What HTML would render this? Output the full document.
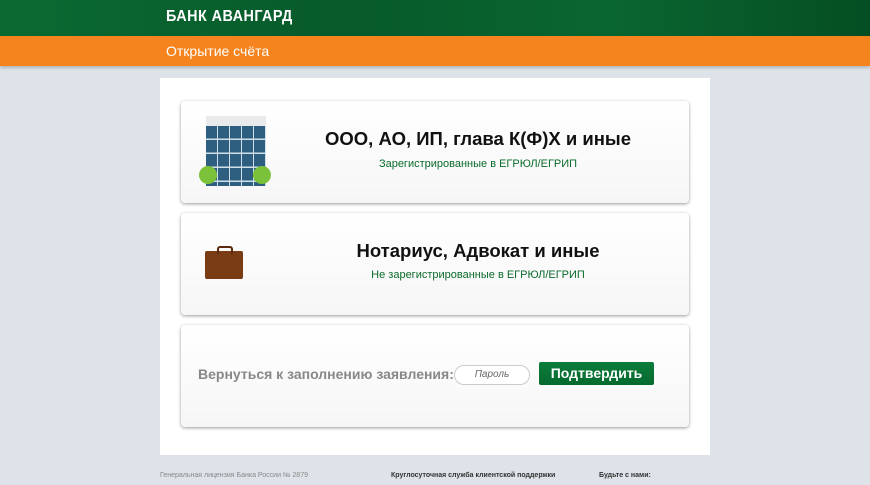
<!DOCTYPE html>
<html><head><meta charset="utf-8"><style>
body{margin:0;width:870px;height:485px;background:#dde3e8;font-family:"Liberation Sans",sans-serif;overflow:hidden;position:relative}
.hdr{position:absolute;top:0;left:0;width:870px;height:36px;background:linear-gradient(90deg,#0b6a32,#075a2a 40%,#0a6630 70%,#054e23);}
.hdr .t{position:absolute;left:166px;top:8px;color:#fff;font-weight:bold;font-size:16px;letter-spacing:.5px;transform:scaleX(.9);transform-origin:left}
.or{position:absolute;top:36px;left:0;width:870px;height:30px;background:#f5841f;box-shadow:0 2px 3px rgba(0,0,0,.2)}
.or span{position:absolute;left:166px;top:7px;color:#fff;font-size:14px}
.main{position:absolute;left:160px;top:78px;width:550px;height:377px;background:#fff}
.card{position:absolute;left:21px;width:508px;height:102px;background:linear-gradient(#fff,#f6f6f6);border-radius:4px;box-shadow:0 1px 3px rgba(0,0,0,.4)}
.h{position:absolute;left:100px;width:394px;text-align:center;font-weight:bold;font-size:18.5px;color:#111;white-space:nowrap}
.s{position:absolute;left:100px;width:394px;text-align:center;font-size:11px;color:#0a6a2a;white-space:nowrap}
.ft{position:absolute;top:472px;font-size:7px;color:#888}
</style></head><body>
<div class="hdr"><div class="t">БАНК АВАНГАРД</div></div>
<div class="or"><span>Открытие счёта</span></div>
<div class="main">
<div class="card" style="top:23px">
 <div style="position:absolute;left:25px;top:15px;width:60px;height:70px;background:#2f5f80;border-top:10px solid #e8eaec;box-sizing:border-box;background-image:linear-gradient(90deg,transparent 90%,#cfe0ea 90%),linear-gradient(transparent 90%,#cfe0ea 90%);background-size:12px 100%,100% 14px"></div>
 <div style="position:absolute;left:18px;top:65px;width:18px;height:18px;border-radius:50%;background:#7cc13a"></div>
 <div style="position:absolute;left:72px;top:65px;width:18px;height:18px;border-radius:50%;background:#7cc13a"></div>
 <div class="h" style="top:27px">ООО, АО, ИП, глава К(Ф)Х и иные</div>
 <div class="s" style="top:57px">Зарегистрированные в ЕГРЮЛ/ЕГРИП</div>
</div>
<div class="card" style="top:135px">
 <div style="position:absolute;left:24px;top:38px;width:38px;height:28px;background:#7a3c14;border-radius:2px"></div>
 <div style="position:absolute;left:36px;top:33px;width:12px;height:6px;border:2px solid #5a2a0a;border-bottom:none;border-radius:3px 3px 0 0"></div>
 <div class="h" style="top:27px">Нотариус, Адвокат и иные</div>
 <div class="s" style="top:56px">Не зарегистрированные в ЕГРЮЛ/ЕГРИП</div>
</div>
<div class="card" style="top:247px">
 <div style="position:absolute;left:17px;top:41px;font-size:14px;font-weight:bold;color:#888;white-space:nowrap">Вернуться к заполнению заявления:</div>
 <div style="position:absolute;left:273px;top:40px;width:74px;height:18px;border:1px solid #ccc;border-radius:10px;background:#fff;font-style:italic;font-size:10px;color:#666;text-align:center;line-height:18px">Пароль</div>
 <div style="position:absolute;left:358px;top:37px;width:115px;height:23px;background:linear-gradient(#0b7c3a,#056a2e);color:#fff;font-weight:bold;font-size:14px;text-align:center;line-height:23px;border-radius:2px">Подтвердить</div>
</div>
</div>
<div class="ft" style="left:160px">Генеральная лицензия Банка России № 2879</div>
<div class="ft" style="left:391px;color:#333;font-weight:bold">Круглосуточная служба клиентской поддержки</div>
<div class="ft" style="left:599px;color:#333;font-weight:bold">Будьте с нами:</div>
</body></html>
